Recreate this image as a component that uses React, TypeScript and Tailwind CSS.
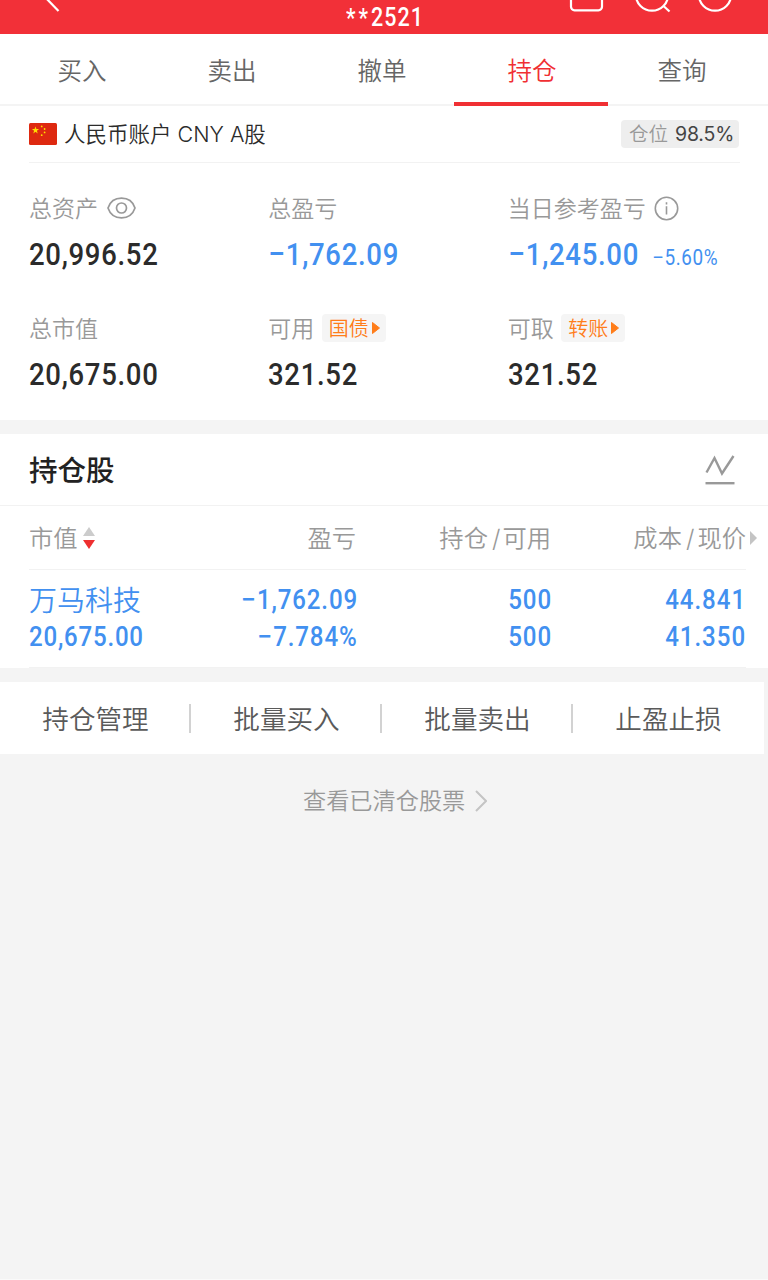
import React from 'react';
import clsx from 'clsx';

const tabs = ['买入', '卖出', '撤单', '持仓', '查询'];
const actions = ['持仓管理', '批量买入', '批量卖出', '止盈止损'];

function TopBar() {
  return (
    <header className="relative h-[34px] bg-[#f23038]">
      <svg className="absolute inset-0" width="768" height="34" fill="none" stroke="#fff" strokeWidth="2.2">
        <path d="M44 -4L58.5 11" />
        <rect x="571" y="-20" width="31" height="30.3" rx="3.5" />
        <circle cx="652" cy="-5.5" r="16.2" />
        <path d="M663 5.5L669.5 11.5" />
        <circle cx="715" cy="-5.5" r="16.2" />
      </svg>
      <Num className="absolute left-[346px] top-px flex h-[32px] origin-left leading-[32px] text-[25px] tracking-[0.045em] text-white">
        <span className="pt-[3px] leading-[29px] tracking-[0.14em]">**</span>
        <span className="pt-px">2521</span>
      </Num>
    </header>
  );
}

// Roboto squeezed horizontally, close to a DIN face
function Num({ className, children }: { className?: string; children: React.ReactNode }) {
  return (
    <span
      className={clsx(
        "block whitespace-nowrap font-['Roboto','Noto_Sans_CJK_SC',sans-serif] tabular-nums scale-x-[0.86]",
        !className?.includes('font-') && 'font-medium',
        className
      )}
    >
      {children}
    </span>
  );
}

function Minus() {
  return <span className="mr-[0.06em] inline-block origin-left scale-x-110">−</span>;
}

function Tag({ label }: { label: string }) {
  return (
    <button className="relative -top-px ml-[7.5px] flex h-7 w-16 items-center rounded bg-[#f5f5f5] pl-[7px] pt-px text-[20px] font-[350] text-[#ff7d1a]">
      {label}
      <svg className="relative -top-px ml-[3px]" width="8" height="12" viewBox="0 0 8 12">
        <path d="M0.5 0.5L7.5 6L0.5 11.5Z" fill="#ff7d1a" stroke="#ff7d1a" strokeLinejoin="round" />
      </svg>
    </button>
  );
}

function EyeIcon() {
  return (
    <svg className="relative -top-[1.5px] ml-[9px]" width="29" height="22" viewBox="0 0 29 22" fill="none" stroke="#999" strokeWidth="1.7">
      <path d="M1 11C3 5 8 1.2 14.5 1.2S26 5 28 11C26 17 21 20.8 14.5 20.8S3 17 1 11Z" />
      <circle cx="14.5" cy="11" r="5" />
    </svg>
  );
}

function InfoIcon() {
  return (
    <svg className="relative -top-px ml-[8px]" width="25" height="25" viewBox="0 0 25 25" fill="none" stroke="#999" strokeWidth="1.6">
      <circle cx="12.5" cy="12.5" r="11.2" />
      <path d="M12.5 10.2V18.5M12.5 6.3V8.4" />
    </svg>
  );
}

interface StatProps {
  label: string;
  value: string;
  down?: boolean;
  extra?: React.ReactNode;
  note?: string;
}

function Stat({ label, value, down, extra, note }: StatProps) {
  return (
    <div className="h-[120px] pt-8">
      <div className="flex h-7 items-center whitespace-nowrap text-[23px] font-[350] text-[#999]">
        {label}
        {extra}
      </div>
      <div className={clsx('flex h-11 items-baseline pt-[9px]', down ? 'text-[#4290f0]' : 'text-[#2b2b2b]')}>
        <Num className="origin-left text-[32px] leading-[44px] tracking-[0.025em]">
          {down && <Minus />}
          {value}
        </Num>
        {note && (
          <Num className="-ml-[8px] origin-left text-[22px] font-[450] tracking-[0.03em]">
            <Minus />
            {note}
          </Num>
        )}
      </div>
    </div>
  );
}

export default function App() {
  return (
    <div className="min-h-[1280px] w-[768px] overflow-hidden border-b border-[#fafafa] bg-[#f4f4f4] font-['Inter','Noto_Sans_CJK_SC',sans-serif]">
      <TopBar />

      <nav className="flex h-[72px] border-b-2 border-[#f4f4f4] bg-white pl-[7px] text-[24.5px] font-[350] text-[#666]">
        {tabs.map((tab) => (
          <div
            key={tab}
            className={clsx('relative w-[150px] text-center leading-[75px]', tab === '持仓' && 'text-[#f02f33]')}
          >
            {tab}
            {tab === '持仓' && <div className="absolute -left-[3px] top-[68px] h-[3.5px] w-[154px] bg-[#f02f33]" />}
          </div>
        ))}
      </nav>

      <section className="h-[314px] bg-white pl-[29px]">
        <div className="flex h-[57px] w-[711px] items-center justify-between border-b border-[#f2f2f2]">
          <div className="flex items-center">
            <svg width="28" height="22" viewBox="0 0 28 22">
              <rect width="28" height="22" rx="1.5" fill="#de2910" />
              <g fill="#ffde00">
                <path d="M6.5 3.5L7.4 6.1H10.1L7.9 7.7L8.7 10.4L6.5 8.8L4.3 10.4L5.1 7.7L2.9 6.1H5.6Z" />
                <circle cx="12.7" cy="3.4" r="0.9" />
                <circle cx="15.6" cy="6" r="0.9" />
                <circle cx="15.6" cy="9.4" r="0.9" />
                <circle cx="12.7" cy="12.2" r="0.9" />
              </g>
            </svg>
            <span className="ml-[7px] whitespace-nowrap pt-px text-[21.5px] font-[350] text-[#2b2b2b]">
              人民币账户 CNY A股
            </span>
          </div>
          <div className="mr-px flex h-7 w-[118px] items-center rounded bg-[#eee] pl-2 pt-[2px] text-[19.5px] font-[350] text-[#999]">
            仓位
            <span className="ml-[7px] text-[19.5px] font-normal tracking-[-0.01em] text-[#444]">98.5%</span>
          </div>
        </div>
        <div className="grid w-[718px] grid-cols-3">
          <Stat label="总资产" value="20,996.52" extra={<EyeIcon />} />
          <Stat label="总盈亏" value="1,762.09" down />
          <Stat label="当日参考盈亏" value="1,245.00" down note="5.60%" extra={<InfoIcon />} />
          <Stat label="总市值" value="20,675.00" />
          <Stat label="可用" value="321.52" extra={<Tag label="国债" />} />
          <Stat label="可取" value="321.52" extra={<Tag label="转账" />} />
        </div>
      </section>

      <section className="mt-[14px] h-[234px] bg-white">
        <div className="flex h-[72px] items-center justify-between border-b border-[#f2f2f2] pl-[29px] pr-[33.5px]">
          <h2 className="pt-1 text-[28.5px] font-medium text-[#222]">持仓股</h2>
          <svg width="30" height="30" viewBox="0 0 30 30" fill="none" stroke="#999" strokeWidth="2.4">
            <path d="M1.5 17.5L9.5 3L17 18.5L28.5 1" />
            <path d="M0.5 28.2H29.5" />
          </svg>
        </div>

        <div className="ml-[29px] flex h-16 w-[717px] items-center border-b border-[#f2f2f2] pt-[2px] text-[24.3px] font-[350] text-[#999]">
          <div className="flex w-[130px] items-center">
            市值
            <svg className="relative -top-px ml-[5px]" width="12" height="24" viewBox="0 0 12 24">
              <path d="M6 1L12 10H0Z" fill="#ccc" />
              <path d="M0 14H12L6 23Z" fill="#ee2f30" />
            </svg>
          </div>
          <div className="w-[197px] text-right">盈亏</div>
          <div className="w-[195px] text-right">
            持仓<span className="ml-[4px] mr-[2px]">/</span>可用
          </div>
          <div className="relative w-[195px] text-right">
            成本<span className="ml-[4px] mr-[3px]">/</span>现价
            <svg className="absolute -right-[11px] top-[11px]" width="7" height="14" viewBox="0 0 7 14">
              <path d="M0 0L7 7L0 14Z" fill="#c4c4c4" />
            </svg>
          </div>
        </div>

        <div className="ml-[29px] flex h-[98px] w-[717px] border-b border-[#f2f2f2] pt-[11px] text-[28px] text-[#4290f0]">
          <div className="w-[130px]">
            <div className="h-[37px] whitespace-nowrap font-[350] leading-[41px]">万马科技</div>
            <Num className="origin-left leading-[37px] tracking-[0.032em]">20,675.00</Num>
          </div>
          <div className="flex w-[199px] flex-col items-end leading-[37px] tracking-[0.036em]">
            <Num className="origin-right"><Minus />1,762.09</Num>
            <Num className="origin-right"><Minus />7.784%</Num>
          </div>
          <div className="flex w-[194.5px] flex-col items-end leading-[37px] tracking-[0.04em]">
            <Num className="origin-right">500</Num>
            <Num className="origin-right">500</Num>
          </div>
          <div className="flex w-[194px] flex-col items-end leading-[37px] tracking-[0.04em]">
            <Num className="origin-right">44.841</Num>
            <Num className="origin-right">41.350</Num>
          </div>
        </div>
      </section>

      <div className="mt-[14px] flex h-[72px] w-[764px] items-center bg-white text-[26.6px] font-[350] text-[#5a5a5a]">
        {actions.map((action, i) => (
          <div key={action} className="relative w-[191px] pt-1 text-center">
            {action}
            {i > 0 && <div className="absolute -left-[2px] top-[8px] h-[29px] w-[2px] bg-[#d2d2d2]" />}
          </div>
        ))}
      </div>

      <div className="ml-[303px] mt-[29px] flex h-9 items-center text-[23.2px] font-[350] text-[#999]">
        查看已清仓股票
        <svg className="ml-[10px]" width="12" height="22" viewBox="0 0 12 22" fill="none" stroke="#c4c4c4" strokeWidth="2">
          <path d="M1 1L11 11L1 21" />
        </svg>
      </div>
    </div>
  );
}
